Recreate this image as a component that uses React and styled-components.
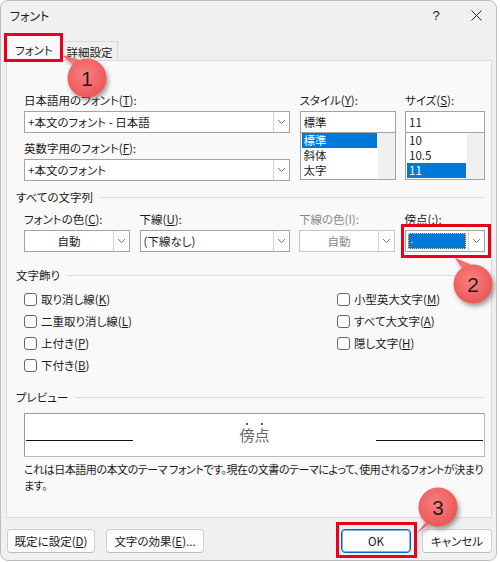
import styled, { createGlobalStyle } from "styled-components";

const GlobalStyle = createGlobalStyle`
  body {
    margin: 0;
    background: #fff;
    font-family: "Noto Sans CJK JP", "Noto Sans", sans-serif;
    font-size: 11.5px;
    color: #1b1b1b;
    font-feature-settings: "palt";
  }
`;

const Window = styled.div`
  position: relative;
  width: 497px;
  height: 561px;
  box-sizing: border-box;
  border: 1px solid #bdbdbd;
  border-radius: 8px;
  background: #f0f0f0;
  display: flex;
  flex-direction: column;
  overflow: hidden;
`;

const TitleBar = styled.div`
  height: 28px;
  display: flex;
  align-items: center;
  padding-left: 9px;
  font-size: 12px;
`;

const Title = styled.span`
  flex: 1;
`;

const TitleButton = styled.div`
  width: 40px;
  height: 28px;
  display: flex;
  align-items: center;
  justify-content: center;
  font-family: "Liberation Sans", sans-serif;
  font-size: 13px;
  color: #222;
`;

const Tabs = styled.div`
  height: 31px;
  display: flex;
  align-items: flex-end;
  padding-left: 5px;
`;

const Tab = styled.div`
  position: relative;
  z-index: 1;
  box-sizing: border-box;
  display: flex;
  align-items: center;
  justify-content: center;
  border: 1px solid #d9d9d9;
  border-bottom: none;
  ${(p) =>
    p.$active
      ? `height: 27px; width: 56px; background: #f9f9f9; margin-bottom: -1px; padding-top: 3px;`
      : `height: 19px; width: 56px; background: #f0f0f0; border-left: none; padding-top: 1px;`}
`;

const Panel = styled.div`
  margin: 0 4px 0 5px;
  height: 458px;
  box-sizing: border-box;
  border: 1px solid #d9d9d9;
  background: #f9f9f9;
  padding: 31px 6px 0 17px;
`;

const TopGrid = styled.div`
  display: grid;
  grid-template-columns: 266px 96px 80px;
  column-gap: 9.5px;
`;

const Column = styled.div`
  display: flex;
  flex-direction: column;
`;

const Label = styled.div`
  height: 16px;
  line-height: 16px;
  margin-bottom: 3px;
  margin-top: ${(p) => p.$top || 0}px;
  color: ${(p) => (p.$disabled ? "#8a8a8a" : "#1b1b1b")};
  white-space: nowrap;
`;

const ComboBox = styled.div`
  display: flex;
  height: 22px;
  box-sizing: border-box;
  border: 1px solid ${(p) => (p.$disabled ? "#c6c6c6" : "#a3a3a3")};
  background: #fff;
`;

const ComboValue = styled.div`
  flex: 1;
  display: flex;
  align-items: center;
  justify-content: ${(p) => (p.$center ? "center" : "flex-start")};
  padding: 0 ${(p) => (p.$fill ? 2 : 3)}px;
  color: ${(p) => (p.$disabled ? "#8a8a8a" : "#1b1b1b")};
  white-space: nowrap;
`;

const FocusFill = styled.div`
  flex: 1;
  height: 14px;
  background: #0078d7;
  border: 1px dotted #f3c77a;
  color: #fff;
  font-size: 10px;
  line-height: 10px;
  padding-left: 2px;
`;

const ComboArrow = styled.div`
  width: 15px;
  border-left: 1px solid #d4d4d4;
  display: flex;
  align-items: center;
  justify-content: center;
`;

const TextBox = styled.div`
  height: 22px;
  box-sizing: border-box;
  border: 1px solid #a3a3a3;
  background: #fff;
  display: flex;
  align-items: center;
  padding-left: 3px;
`;

const ListBox = styled.div`
  height: 47px;
  box-sizing: border-box;
  border: 1px solid #a3a3a3;
  border-top: none;
  background: #fff;
  display: flex;
`;

const ListItems = styled.div`
  flex: 1;
  padding: 0 1px;
`;

const ListItem = styled.div`
  height: 15px;
  line-height: 15px;
  padding-left: 2px;
  background: ${(p) => (p.$selected ? "#0078d7" : "transparent")};
  color: ${(p) => (p.$selected ? "#fff" : "#1b1b1b")};
`;

const ScrollTrack = styled.div`
  width: 17px;
  background: #f0f0f0;
`;

const GroupHeader = styled.div`
  display: flex;
  align-items: center;
  gap: 6px;
  height: 16px;
  margin: ${(p) => p.$top}px 0 0 -8px;
  &::after {
    content: "";
    flex: 1;
    border-top: 1px solid #dcdcdc;
  }
`;

const RowGrid = styled.div`
  display: grid;
  grid-template-columns: 106px 150px 96px 80px;
  column-gap: 9.5px;
  margin-top: 6px;
`;

const CheckGrid = styled.div`
  display: grid;
  grid-template-columns: 313px 1fr;
  grid-auto-flow: column;
  grid-template-rows: repeat(4, 16px);
  row-gap: 6px;
  margin-top: 8px;
`;

const CheckRow = styled.label`
  display: flex;
  align-items: center;
  gap: 4px;
  line-height: 16px;
  white-space: nowrap;
`;

const Box = styled.span`
  width: 13px;
  height: 13px;
  box-sizing: border-box;
  border: 1px solid #666;
  border-radius: 3px;
  background: #fff;
`;

const PreviewBox = styled.div`
  margin-top: 8px;
  height: 44px;
  box-sizing: border-box;
  border: 1px solid #999;
  border-bottom-color: #b9b9b9;
  border-right-color: #b9b9b9;
  background: #fff;
  display: flex;
`;

const PreviewLine = styled.div`
  width: 107px;
  height: 26px;
  margin: 0 1px;
  border-bottom: 1px solid #111;
`;

const PreviewText = styled.div`
  flex: 1;
  display: flex;
  justify-content: center;
  padding-top: 11px;
  font-size: 15px;
  line-height: 20px;
  color: #666;
`;

const Emph = styled.span`
  position: relative;
  &::before {
    content: "";
    position: absolute;
    left: 50%;
    top: -2px;
    width: 2px;
    height: 2px;
    margin-left: -1px;
    border-radius: 50%;
    background: #222;
  }
`;

const Description = styled.div`
  margin-top: 4px;
  font-size: 11px;
  line-height: 16px;
  letter-spacing: -0.45px;
  white-space: nowrap;
`;

const Footer = styled.div`
  display: flex;
  padding: 11px 4px 0 6px;
  gap: 11px;
`;

const Button = styled.div`
  height: 24px;
  box-sizing: border-box;
  width: ${(p) => p.$w}px;
  margin-left: ${(p) => (p.$push ? "auto" : "0")};
  display: flex;
  align-items: center;
  justify-content: center;
  background: #fdfdfd;
  border: 1px solid ${(p) => (p.$primary ? "#0067c0" : "#d0d0d0")};
  border-bottom-color: ${(p) => (p.$primary ? "#0067c0" : "#bcbcbc")};
  box-shadow: ${(p) => (p.$primary ? "inset 0 0 0 1px #7fb2e0" : "none")};
  border-radius: 4px;
  white-space: nowrap;
`;

const Highlight = styled.div`
  position: absolute;
  left: ${(p) => p.$x}px;
  top: ${(p) => p.$y}px;
  width: ${(p) => p.$w}px;
  height: ${(p) => p.$h}px;
  box-sizing: border-box;
  border: 3px solid #e8001c;
  z-index: 5;
  pointer-events: none;
`;

const Callouts = styled.svg`
  position: absolute;
  left: -1px;
  top: -1px;
  z-index: 6;
  pointer-events: none;
`;

function Chevron() {
  return (
    <svg width="9" height="6" viewBox="0 0 9 6">
      <polyline points="1,1 4.5,4.5 8,1" fill="none" stroke="#7a7a7a" strokeWidth="1" />
    </svg>
  );
}

function Combo({ value, center, disabled, focus }) {
  return (
    <ComboBox $disabled={disabled}>
      <ComboValue $center={center} $disabled={disabled} $fill={focus}>
        {focus ? <FocusFill>.</FocusFill> : value}
      </ComboValue>
      <ComboArrow>
        <Chevron />
      </ComboArrow>
    </ComboBox>
  );
}

function Check({ text, accessKey }) {
  return (
    <CheckRow>
      <Box />
      <span>
        {text}(<u>{accessKey}</u>)
      </span>
    </CheckRow>
  );
}

function Badge({ cx, cy, tip, base, n }) {
  return (
    <g filter="url(#shadow)">
      <polygon points={`${tip[0]},${tip[1]} ${base[0]} ${base[1]} ${cx},${cy}`} fill="url(#coral)" />
      <circle cx={cx} cy={cy} r="19.5" fill="url(#coral)" />
      <text
        x={cx}
        y={cy + 7.5}
        textAnchor="middle"
        fontFamily="Liberation Sans, sans-serif"
        fontSize="21"
        fill="#1a1a1a"
      >
        {n}
      </text>
    </g>
  );
}

export default function App() {
  return (
    <>
      <GlobalStyle />
      <Window>
        <TitleBar>
          <Title>フォント</Title>
          <TitleButton>?</TitleButton>
          <TitleButton>
            <svg width="11" height="11" viewBox="0 0 11 11">
              <path d="M0.5 0.5L10.5 10.5M10.5 0.5L0.5 10.5" stroke="#222" strokeWidth="1" />
            </svg>
          </TitleButton>
        </TitleBar>
        <Tabs>
          <Tab $active>フォント</Tab>
          <Tab>詳細設定</Tab>
        </Tabs>
        <Panel>
          <TopGrid>
            <Column>
              <Label>
                日本語用のフォント(<u>T</u>):
              </Label>
              <Combo value="+本文のフォント - 日本語" />
              <Label $top={7}>
                英数字用のフォント(<u>F</u>):
              </Label>
              <Combo value="+本文のフォント" />
            </Column>
            <Column>
              <Label>
                スタイル(<u>Y</u>):
              </Label>
              <TextBox>標準</TextBox>
              <ListBox>
                <ListItems>
                  <ListItem $selected>標準</ListItem>
                  <ListItem>斜体</ListItem>
                  <ListItem>太字</ListItem>
                </ListItems>
                <ScrollTrack />
              </ListBox>
            </Column>
            <Column>
              <Label>
                サイズ(<u>S</u>):
              </Label>
              <TextBox>11</TextBox>
              <ListBox>
                <ListItems>
                  <ListItem>10</ListItem>
                  <ListItem>10.5</ListItem>
                  <ListItem $selected>11</ListItem>
                </ListItems>
                <ScrollTrack />
              </ListBox>
            </Column>
          </TopGrid>

          <GroupHeader $top={8}>すべての文字列</GroupHeader>
          <RowGrid>
            <Column>
              <Label>
                フォントの色(<u>C</u>):
              </Label>
              <Combo value="自動" center />
            </Column>
            <Column>
              <Label>
                下線(<u>U</u>):
              </Label>
              <Combo value="(下線なし)" />
            </Column>
            <Column>
              <Label $disabled>下線の色(I):</Label>
              <Combo value="自動" center disabled />
            </Column>
            <Column>
              <Label>傍点(;):</Label>
              <Combo focus />
            </Column>
          </RowGrid>

          <GroupHeader $top={15}>文字飾り</GroupHeader>
          <CheckGrid>
            <Check text="取り消し線" accessKey="K" />
            <Check text="二重取り消し線" accessKey="L" />
            <Check text="上付き" accessKey="P" />
            <Check text="下付き" accessKey="B" />
            <Check text="小型英大文字" accessKey="M" />
            <Check text="すべて大文字" accessKey="A" />
            <Check text="隠し文字" accessKey="H" />
          </CheckGrid>

          <GroupHeader $top={16}>プレビュー</GroupHeader>
          <PreviewBox>
            <PreviewLine />
            <PreviewText>
              <Emph>傍</Emph>
              <Emph>点</Emph>
            </PreviewText>
            <PreviewLine />
          </PreviewBox>
          <Description>
            これは日本語用の本文のテーマ フォントです。現在の文書のテーマによって、使用されるフォントが決まり
            <br />
            ます。
          </Description>
        </Panel>
        <Footer>
          <Button $w={88}>
            既定に設定(<u>D</u>)
          </Button>
          <Button $w={98}>
            文字の効果(<u>E</u>)...
          </Button>
          <Button $w={70} $push $primary>
            OK
          </Button>
          <Button $w={70}>キャンセル</Button>
        </Footer>

        <Highlight $x={3} $y={32} $w={59} $h={29} />
        <Highlight $x={400} $y={223} $w={90} $h={34} />
        <Highlight $x={335} $y={521} $w={81} $h={36} />

        <Callouts width="500" height="562" viewBox="0 0 500 562">
          <defs>
            <radialGradient id="coral" cx="45%" cy="40%" r="60%">
              <stop offset="0%" stopColor="#f98080" />
              <stop offset="100%" stopColor="#ec5757" />
            </radialGradient>
            <filter id="shadow" x="-50%" y="-50%" width="200%" height="200%">
              <feDropShadow dx="2" dy="3" stdDeviation="2" floodColor="#555" floodOpacity="0.55" />
            </filter>
          </defs>
          <Badge cx={87} cy={78} tip={[62, 55]} base={[80, 60]} n="1" />
          <Badge cx={473} cy={284} tip={[455, 258]} base={[470, 264]} n="2" />
          <Badge cx={438} cy={507} tip={[417, 533]} base={[428, 525]} n="3" />
        </Callouts>
      </Window>
    </>
  );
}
